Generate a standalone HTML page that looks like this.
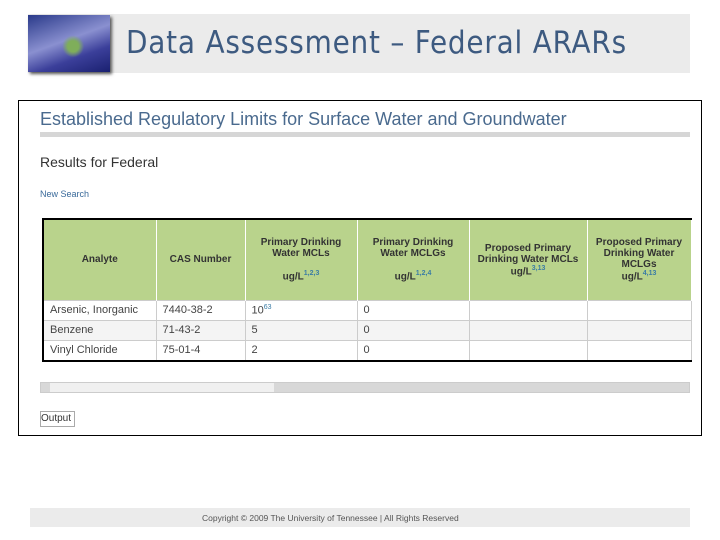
<!DOCTYPE html>
<html><head><style>
body{margin:0;width:720px;height:540px;background:#fff;position:relative;overflow:hidden;font-family:"Liberation Sans",sans-serif}
.a{position:absolute}
td{border:1px solid #ccc;font-size:11px;color:#444;padding:0 6px;height:19px;overflow:hidden;white-space:nowrap}
th{background:#b9d38c;font-size:10px;color:#333;border-right:1px solid #fff;font-weight:bold;padding:0 2px}
sup{color:#3a7ca5;font-size:7px}
</style></head><body>
<div class="a" style="left:28px;top:14px;width:662px;height:59px;background:#ebebeb"></div>
<div class="a" style="left:28px;top:15px;width:82px;height:57px;background:radial-gradient(circle at 55% 55%,#7fae5a 0 10%,transparent 20%),linear-gradient(160deg,#2a3a8a,#8a90d0 45%,#3b3f9a 70%,#1a2070);box-shadow:2px 2px 3px #555"></div>
<div class="a" style="left:126px;top:25px;font-size:31px;color:#3d5a80;font-family:'DejaVu Sans Condensed','Liberation Sans Narrow',sans-serif;letter-spacing:0.8px">Data Assessment – Federal ARARs</div>
<div class="a" style="left:18px;top:100px;width:682px;height:334px;border:1px solid #000"></div>
<div class="a" style="left:40px;top:109px;font-size:18px;color:#4a6a8e">Established Regulatory Limits for Surface Water and Groundwater</div>
<div class="a" style="left:40px;top:132px;width:650px;height:5px;background:#d6d6d6"></div>
<div class="a" style="left:40px;top:154px;font-size:14px;color:#333">Results for Federal</div>
<div class="a" style="left:40px;top:189px;font-size:9px;color:#3a6a9a">New Search</div>
<table class="a" style="left:42px;top:218px;width:648px;table-layout:fixed;border-collapse:collapse;border-top:2px solid #000;border-left:2px solid #000;border-bottom:2px solid #000">
<colgroup><col style="width:113px"><col style="width:89px"><col style="width:112px"><col style="width:112px"><col style="width:118px"><col style="width:104px"></colgroup>
<tr style="height:81px"><th>Analyte</th><th>CAS Number</th><th>Primary Drinking Water MCLs<br><br>ug/L<sup>1,2,3</sup></th><th>Primary Drinking Water MCLGs<br><br>ug/L<sup>1,2,4</sup></th><th>Proposed Primary Drinking Water MCLs<br>ug/L<sup>3,13</sup></th><th>Proposed Primary Drinking Water MCLGs<br>ug/L<sup>4,13</sup></th></tr>
<tr><td>Arsenic, Inorganic</td><td>7440-38-2</td><td>10<sup>63</sup></td><td>0</td><td></td><td></td></tr>
<tr style="background:#f4f4f4"><td>Benzene</td><td>71-43-2</td><td>5</td><td>0</td><td></td><td></td></tr>
<tr><td>Vinyl Chloride</td><td>75-01-4</td><td>2</td><td>0</td><td></td><td></td></tr>
</table>
<div class="a" style="left:40px;top:382px;width:650px;height:11px;background:#d8d8d8;border:1px solid #ccc;box-sizing:border-box"></div>
<div class="a" style="left:50px;top:383px;width:224px;height:9px;background:#f0f0f0"></div>
<div class="a" style="left:40px;top:411px;width:33px;height:14px;border:1px solid #aaa;font-size:10px;color:#333;line-height:14px">Output</div>
<div class="a" style="left:30px;top:508px;width:660px;height:19px;background:#ebebeb"></div>
<div class="a" style="left:202px;top:513px;font-size:8.5px;color:#555">Copyright © 2009 The University of Tennessee | All Rights Reserved</div>
</body></html>
